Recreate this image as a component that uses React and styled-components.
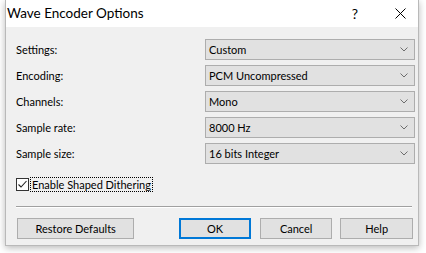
import React from "react";
import styled, { createGlobalStyle } from "styled-components";

const Global = createGlobalStyle`
  html, body { margin: 0; padding: 0; background: #ffffff; }
  body { font-family: Lato, "Noto Sans", sans-serif; }
`;

const Page = styled.div`
  width: 426px;
  height: 253px;
  padding: 0 0 0 5px;
  box-sizing: border-box;
  overflow: hidden;
`;

const Window = styled.div`
  width: 414px;
  height: 246px;
  box-sizing: border-box;
  background: #f0f0f0;
  border: 1px solid #b9b9b9;
  border-top: none;
  box-shadow: 0 2px 7px rgba(0, 0, 0, 0.28);
  display: flex;
  flex-direction: column;
  font-size: 11px;
  color: #000;
`;

const TitleBar = styled.div`
  height: 27px;
  flex: none;
  background: #ffffff;
  display: flex;
  align-items: center;
  padding-left: 1px;
`;

const Title = styled.div`
  flex: 1;
  font-size: 13.5px;
  line-height: 27px;
  color: #000;
`;

const TitleButton = styled.div`
  width: ${(p) => p.$w}px;
  height: 27px;
  display: flex;
  align-items: center;
  justify-content: center;
  font-size: 14px;
  color: #000;
`;

const Body = styled.div`
  flex: 1;
  display: flex;
  flex-direction: column;
  padding: 12px 5px 0 10px;
`;

const Form = styled.div`
  display: grid;
  grid-template-columns: 189px 210px;
  row-gap: 5px;
  align-items: center;
`;

const Label = styled.div`
  font-size: 11px;
  line-height: 21px;
`;

const Combo = styled.div`
  height: 21px;
  box-sizing: border-box;
  background: #e1e1e1;
  border: 1px solid #adadad;
  display: flex;
  align-items: center;
  padding: 0 6px 0 3px;
  font-size: 11px;
`;

const ComboText = styled.span`
  flex: 1;
`;

const CheckRow = styled.div`
  display: flex;
  align-items: center;
  margin-top: 12px;
  height: 16px;
`;

const Box = styled.div`
  width: 13px;
  height: 13px;
  box-sizing: border-box;
  border: 1px solid #333;
  background: #fff;
  display: flex;
  align-items: center;
  justify-content: center;
  margin-right: 1px;
`;

const CheckLabel = styled.span`
  border: 1px dotted #000;
  padding: 0 1px;
  line-height: 13px;
  font-size: 11px;
`;

const Separator = styled.div`
  margin-top: 14px;
  height: 1px;
  background: #a0a0a0;
  border-bottom: 1px solid #ffffff;
  margin-right: 1px;
`;

const ButtonRow = styled.div`
  display: flex;
  margin-top: 10px;
  padding-left: 1px;
`;

const Button = styled.div`
  height: 21px;
  box-sizing: border-box;
  width: ${(p) => p.$w}px;
  margin-left: ${(p) => p.$ml || 0}px;
  background: #e1e1e1;
  border: ${(p) => (p.$default ? "2px solid #0078d7" : "1px solid #adadad")};
  display: flex;
  align-items: center;
  justify-content: center;
  font-size: 11px;
`;

const Chevron = () => (
  <svg width="8" height="5" viewBox="0 0 8 5">
    <path d="M0.5 0.5 L4 4 L7.5 0.5" fill="none" stroke="#6d6d6d" strokeWidth="1" />
  </svg>
);

const rows = [
  ["Settings:", "Custom"],
  ["Encoding:", "PCM Uncompressed"],
  ["Channels:", "Mono"],
  ["Sample rate:", "8000 Hz"],
  ["Sample size:", "16 bits Integer"],
];

export default function App() {
  return (
    <>
      <Global />
      <Page>
        <Window>
          <TitleBar>
            <Title>Wave Encoder Options</Title>
            <TitleButton $w={54}>?</TitleButton>
            <TitleButton $w={36}>
              <svg width="11" height="11" viewBox="0 0 11 11">
                <path d="M0.5 0.5 L10.5 10.5 M10.5 0.5 L0.5 10.5" stroke="#000" strokeWidth="1" />
              </svg>
            </TitleButton>
          </TitleBar>
          <Body>
            <Form>
              {rows.map(([l, v]) => (
                <React.Fragment key={l}>
                  <Label>{l}</Label>
                  <Combo>
                    <ComboText>{v}</ComboText>
                    <Chevron />
                  </Combo>
                </React.Fragment>
              ))}
            </Form>
            <CheckRow>
              <Box>
                <svg width="11" height="11" viewBox="0 0 11 11">
                  <path d="M1.5 5.5 L4 8 L9.5 2" fill="none" stroke="#222" strokeWidth="1.1" />
                </svg>
              </Box>
              <CheckLabel>Enable Shaped Dithering</CheckLabel>
            </CheckRow>
            <Separator />
            <ButtonRow>
              <Button $w={118}>Restore Defaults</Button>
              <Button $w={72} $ml={45} $default>OK</Button>
              <Button $w={73} $ml={9}>Cancel</Button>
              <Button $w={73} $ml={8}>Help</Button>
            </ButtonRow>
          </Body>
        </Window>
      </Page>
    </>
  );
}
